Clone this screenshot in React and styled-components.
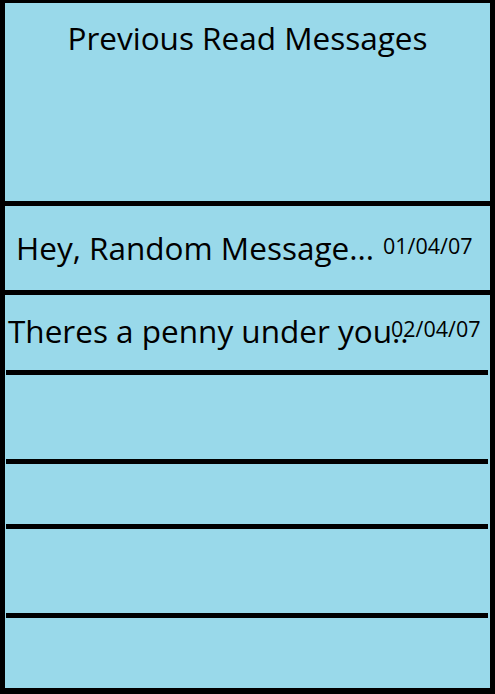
import styled, { createGlobalStyle } from 'styled-components';

const GlobalStyle = createGlobalStyle`
  html, body {
    margin: 0;
    padding: 0;
    background: #000;
  }
`;

const Frame = styled.div`
  width: 495px;
  height: 694px;
  box-sizing: border-box;
  background: #99d9ea;
  border-style: solid;
  border-color: #000;
  border-width: 3px 5px 6px 5px;
  display: flex;
  flex-direction: column;
  font-family: "Open Sans", Lato, sans-serif;
  color: #000;
`;

const Header = styled.div`
  height: 198px;
  display: flex;
  justify-content: center;
  align-items: flex-start;
  padding-top: 19px;
  box-sizing: border-box;
  font-size: 31.5px;
  line-height: 1;
`;

const Divider = styled.div`
  height: 5px;
  background: #000;
  margin: ${p => (p.inset ? '0 2px 0 1px' : '0')};
  flex: none;
`;

const Row = styled.div`
  height: ${p => p.height}px;
  flex: none;
  display: grid;
  grid-template-columns: ${p => p.textWidth}px auto;
  align-items: start;
  padding-left: ${p => p.indent}px;
  padding-top: ${p => p.top}px;
  box-sizing: border-box;
`;

const MessageText = styled.span`
  font-size: 31.5px;
  line-height: 1;
  white-space: nowrap;
`;

const MessageDate = styled.span`
  font-size: 21.5px;
  line-height: 1;
  margin-top: 3px;
  white-space: nowrap;
`;

const EmptyRow = styled.div`
  height: ${p => p.height}px;
  flex: none;
`;

const messages = [
  { text: 'Hey, Random Message...', date: '01/04/07', height: 84, indent: 11, textWidth: 367, top: 26 },
  { text: 'Theres a penny under you..', date: '02/04/07', height: 75, indent: 3, textWidth: 383, top: 20 },
];

const emptyRows = [84, 60, 84];

export default function App() {
  return (
    <>
      <GlobalStyle />
      <Frame>
        <Header>Previous Read Messages</Header>
        <Divider />
        {messages.map((m, i) => (
          <div key={m.date}>
            <Row height={m.height} indent={m.indent} textWidth={m.textWidth} top={m.top}>
              <MessageText>{m.text}</MessageText>
              <MessageDate>{m.date}</MessageDate>
            </Row>
            <Divider inset={i > 0} />
          </div>
        ))}
        {emptyRows.map((h, i) => (
          <div key={i}>
            <EmptyRow height={h} />
            <Divider inset />
          </div>
        ))}
        <EmptyRow height={70} />
      </Frame>
    </>
  );
}
